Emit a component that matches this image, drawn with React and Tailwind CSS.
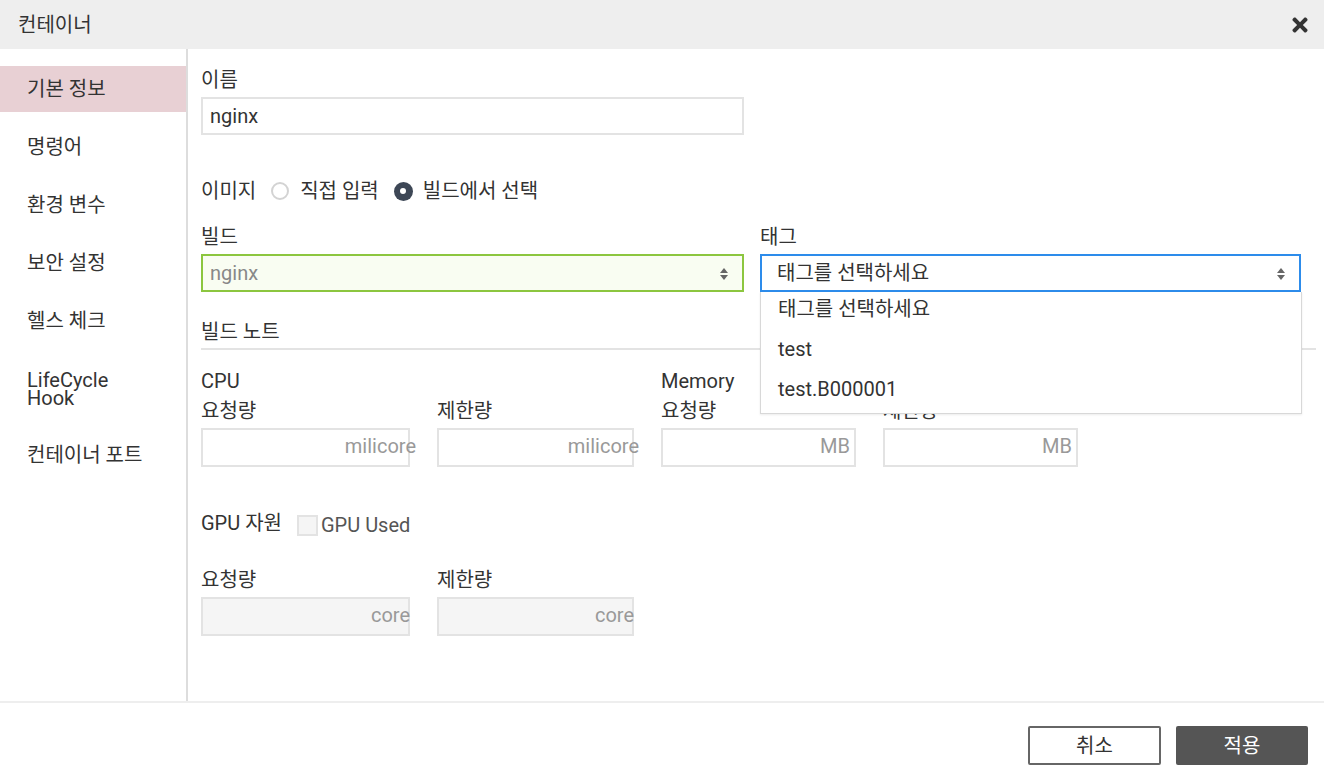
import React from 'react';
import { FaTimes } from 'react-icons/fa';

const font = { fontFamily: 'Roboto, "Noto Sans CJK KR", sans-serif' };

const menu = ['기본 정보', '명령어', '환경 변수', '보안 설정', '헬스 체크'];

const Arrows = () => (
    <svg width="8" height="12" viewBox="0 0 8 12" className="absolute right-[14px] top-[12px]">
        <path d="M4 0 L8 5 L0 5 Z" fill="#666" />
        <path d="M4 12 L8 7 L0 7 Z" fill="#666" />
    </svg>
);

const UnitInput = ({ w, unit, disabled, right }) => (
    <div className={`relative h-[39px] ${w}`}>
        <div className={`h-full w-full border-2 border-[#e3e3e3] ${disabled ? 'bg-[#f5f5f5]' : 'bg-white'}`}></div>
        <span className={`absolute top-[5px] text-[20px] leading-[26px] text-[#999] ${right}`}>{unit}</span>
    </div>
);

const Label = ({ children, className = '' }) => (
    <div className={`h-[24px] leading-[24px] text-[20px] text-[#333] ${className}`}>{children}</div>
);

export default function App() {
    return (
        <div className="w-[1324px] h-[780px] bg-white flex flex-col overflow-hidden" style={font}>
            {/* Header */}
            <div className="h-[49px] bg-[#eeeeee] flex items-center justify-between pl-[18px] pr-[13px] shrink-0">
                <span className="text-[20px] text-[#333]">컨테이너</span>
                <FaTimes className="text-[#333] w-[22px] h-[22px]" />
            </div>

            {/* Body */}
            <div className="flex h-[652px]">
                {/* Sidebar */}
                <div className="w-[188px] border-r-2 border-[#dddddd] pt-[17px] shrink-0">
                    {menu.map((m, i) => (
                        <div
                            key={m}
                            className={`h-[46px] mb-[12px] flex items-center pl-[27px] text-[20px] text-[#333] ${i === 0 ? 'bg-[#e8d0d4]' : ''}`}
                        >
                            {m}
                        </div>
                    ))}
                    <div className="h-[46px] mt-[22px] mb-[20px] flex flex-col justify-center pl-[27px] text-[20px] leading-[18px] text-[#333]">
                        <span>LifeCycle</span>
                        <span>Hook</span>
                    </div>
                    <div className="h-[46px] flex items-center pl-[27px] text-[20px] text-[#333]">컨테이너 포트</div>
                </div>

                {/* Content */}
                <div className="flex-1 pl-[13px] pt-[19px] pr-[8px] relative">
                    <Label>이름</Label>
                    <div className="mt-[5px] w-[543px] h-[38px] border-2 border-[#e3e3e3] flex items-center pl-[7px] text-[20px] text-[#333]">
                        nginx
                    </div>

                    <div className="mt-[44px] h-[24px] flex items-center text-[20px] text-[#333]">
                        <span>이미지</span>
                        <span className="ml-[15px] w-[18px] h-[18px] rounded-full border-2 border-[#d3d3d3]"></span>
                        <span className="ml-[11px]">직접 입력</span>
                        <span className="ml-[15px] w-[19px] h-[19px] rounded-full bg-[#3d4756] flex items-center justify-center">
                            <span className="w-[6px] h-[6px] rounded-full bg-white"></span>
                        </span>
                        <span className="ml-[10px]">빌드에서 선택</span>
                    </div>

                    <div className="mt-[22px] flex gap-[16px]">
                        <div className="w-[543px]">
                            <Label>빌드</Label>
                            <div className="relative mt-[5px] h-[38px] border-2 border-[#8cc63f] bg-[#f9fdf2] flex items-center pl-[7px] text-[20px] text-[#888]">
                                nginx
                                <Arrows />
                            </div>
                        </div>
                        <div className="w-[541px] relative">
                            <Label>태그</Label>
                            <div className="relative mt-[5px] h-[38px] border-2 border-[#2d8ceb] bg-white flex items-center pl-[15px] text-[20px] text-[#333]">
                                태그를 선택하세요
                                <Arrows />
                            </div>
                            {/* Dropdown */}
                            <div className="absolute left-0 top-[67px] w-[542px] h-[122px] bg-white border border-[#d8d8d8] border-t-0 shadow-[0_1px_2px_rgba(0,0,0,0.08)] z-10 text-[20px] text-[#333] pt-[5px]">
                                <div className="h-[40px] leading-[24px] pl-[17px]">태그를 선택하세요</div>
                                <div className="h-[40px] leading-[24px] pl-[17px]">test</div>
                                <div className="h-[40px] leading-[24px] pl-[17px]">test.B000001</div>
                            </div>
                        </div>
                    </div>

                    <div className="mt-[28px] w-[1115px] border-b-2 border-[#e3e3e3] pb-[4px]">
                        <Label>빌드 노트</Label>
                    </div>

                    <div className="mt-[19px] flex">
                        <div className="w-[459px]">
                            <Label>CPU</Label>
                            <div className="mt-[6px] flex gap-[27px]">
                                <div>
                                    <Label>요청량</Label>
                                    <div className="mt-[5px]"><UnitInput w="w-[209px]" unit="milicore" right="right-[-6px]" /></div>
                                </div>
                                <div>
                                    <Label>제한량</Label>
                                    <div className="mt-[5px]"><UnitInput w="w-[197px]" unit="milicore" right="right-[-5px]" /></div>
                                </div>
                            </div>
                        </div>
                        <div className="pl-[1px]">
                            <Label>Memory</Label>
                            <div className="mt-[6px] flex gap-[27px]">
                                <div>
                                    <Label>요청량</Label>
                                    <div className="mt-[5px]"><UnitInput w="w-[195px]" unit="MB" right="right-[6px]" /></div>
                                </div>
                                <div>
                                    <Label>제한량</Label>
                                    <div className="mt-[5px]"><UnitInput w="w-[195px]" unit="MB" right="right-[6px]" /></div>
                                </div>
                            </div>
                        </div>
                    </div>

                    <div className="mt-[44px] h-[24px] flex items-center text-[20px] text-[#333]">
                        <span>GPU 자원</span>
                        <span className="ml-[15px] w-[21px] h-[21px] border-2 border-[#e3e3e3] bg-[#f5f5f5] mt-[4px]"></span>
                        <span className="ml-[3px] text-[#555] mt-[4px]">GPU Used</span>
                    </div>

                    <div className="mt-[33px] flex gap-[27px]">
                        <div>
                            <Label>요청량</Label>
                            <div className="mt-[5px]"><UnitInput w="w-[209px]" unit="core" disabled right="right-[0px]" /></div>
                        </div>
                        <div>
                            <Label>제한량</Label>
                            <div className="mt-[5px]"><UnitInput w="w-[197px]" unit="core" disabled right="right-[0px]" /></div>
                        </div>
                    </div>
                </div>
            </div>

            {/* Footer */}
            <div className="flex-1 border-t-2 border-[#eeeeee] flex justify-end items-start pt-[23px] pr-[16px] gap-[15px]">
                <button className="w-[133px] h-[39px] border-2 border-[#666] rounded-[2px] bg-white text-[20px] text-[#333]">취소</button>
                <button className="w-[132px] h-[39px] rounded-[2px] bg-[#555555] text-[20px] text-white">적용</button>
            </div>
        </div>
    );
}
